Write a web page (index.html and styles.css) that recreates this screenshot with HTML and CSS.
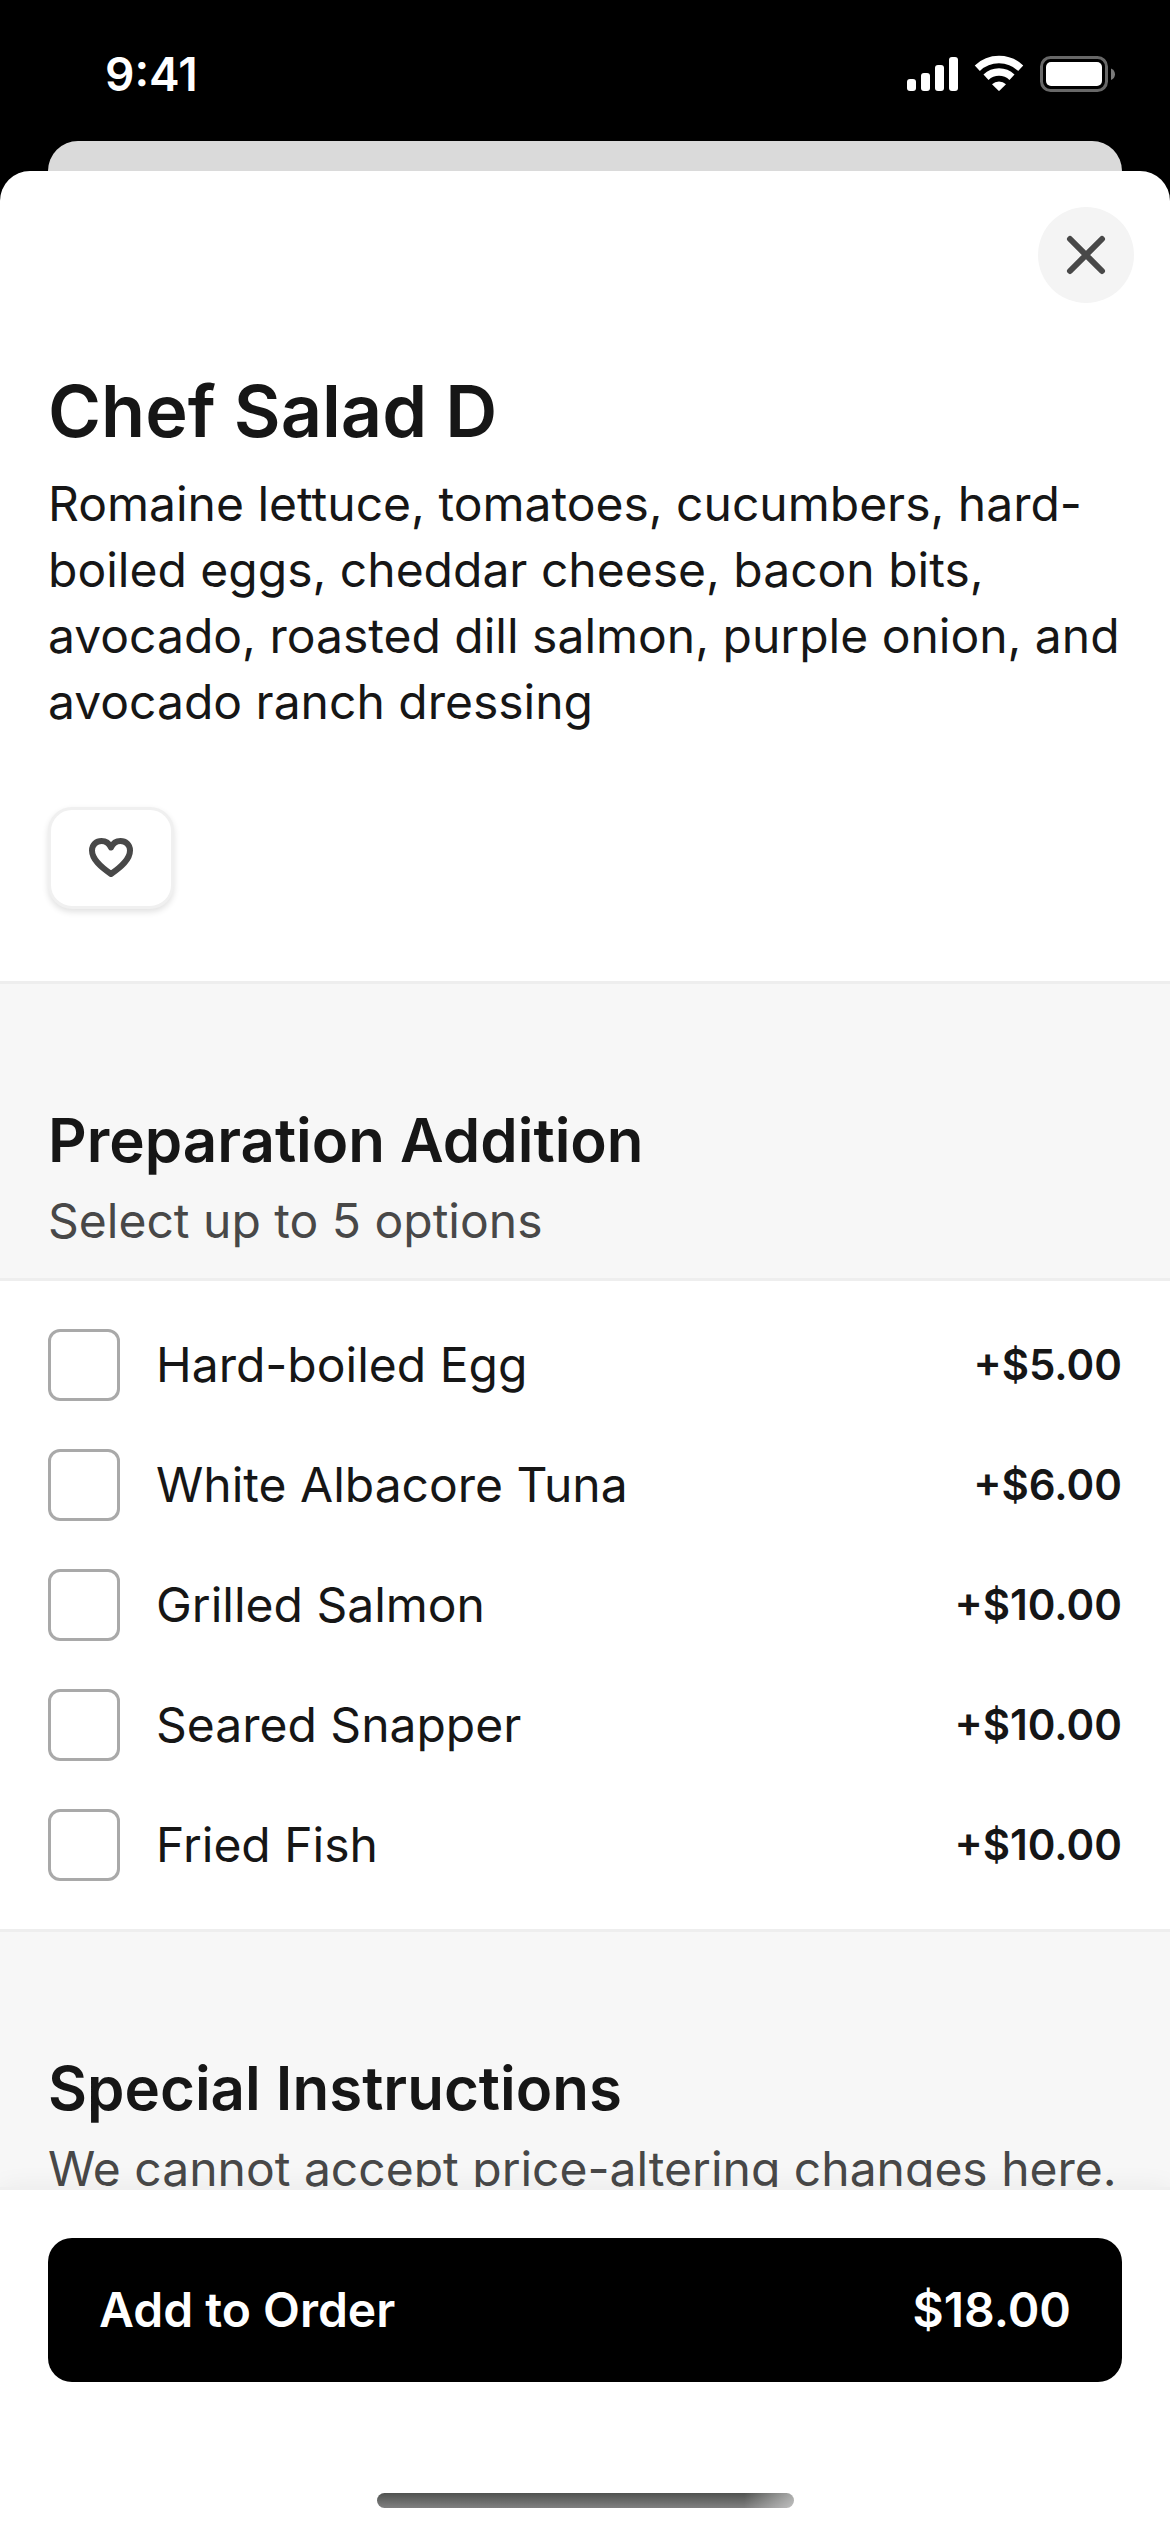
FILE: index.html
```html
<!DOCTYPE html>
<html lang="en">
<head>
    <meta charset="UTF-8">
    <meta name="viewport" content="width=device-width, initial-scale=1.0">
    <title>Chef Salad D</title>
    <link rel="stylesheet" href="styles.css">
</head>
<body>
    <header class="status-bar">
        <span class="time">9:41</span>
        <svg class="status-icons" width="210" height="40" viewBox="906 54 210 40" aria-hidden="true">
            <!-- Signal -->
            <g fill="#fff">
                <rect x="907" y="79" width="9" height="12" rx="3"/>
                <rect x="921" y="73" width="9" height="18" rx="3"/>
                <rect x="935" y="65" width="9" height="26" rx="3"/>
                <rect x="949" y="57" width="9" height="34" rx="3"/>
            </g>
            <!-- Wifi -->
            <g fill="none" stroke="#fff" stroke-width="7.4">
                <path d="M977.3 68.2a31.5 31.5 0 0 1 43.4 0"/>
                <path d="M986 77.2a19 19 0 0 1 26 0"/>
            </g>
            <path d="M992 84.2a10.200 10.200 0 0 1 14 0l-6.300 6.400a1 1 0 0 1-1.400 0z" fill="#fff"/>
            <!-- Battery -->
            <rect x="1041.500" y="57.500" width="65" height="33" rx="9" fill="none" stroke="#686868" stroke-width="3"/>
            <rect x="1046" y="62" width="56" height="24" rx="5" fill="#fff"/>
            <path d="M1111 68.500c5.300 2 5.300 9.500 0 11.500z" fill="#7a7a7a"/>
        </svg>
    </header>
    <div class="back-card"></div>

    <main class="sheet">
        <div class="scroller">
            <div class="item">
                <button class="close" type="button" aria-label="Close">
                    <svg width="48" height="48" viewBox="0 0 48 48" fill="none" stroke="#484848" stroke-width="6" stroke-linecap="round">
                        <path d="M8 8l32 32M40 8L8 40"/>
                    </svg>
                </button>
                <h1>Chef Salad D</h1>
                <p class="description">Romaine lettuce, tomatoes, cucumbers, hard-boiled eggs, cheddar cheese, bacon bits, avocado, roasted dill salmon, purple onion, and avocado ranch dressing</p>
                <button class="favorite" type="button" aria-label="Add to favorites">
                    <svg width="48" height="48" viewBox="0 0 48 48" fill="none" stroke="#484848" stroke-width="6" stroke-linejoin="round">
                        <path d="M24 40C14 33 5 25.500 5 16.500C5 10.500 9.500 7 14.500 7C18.500 7 22 9 24 13.500C26 9 29.500 7 33.500 7C38.500 7 43 10.500 43 16.500C43 25.500 34 33 24 40z"/>
                    </svg>
                </button>
            </div>

            <section>
                <div class="section-header">
                    <h2>Preparation Addition</h2>
                    <p>Select up to 5 options</p>
                </div>
                <div class="options">
                    <label class="option">
                        <input type="checkbox" name="addition" value="egg">
                        <span class="name">Hard-boiled Egg</span>
                        <span class="price">+$5.00</span>
                    </label>
                    <label class="option">
                        <input type="checkbox" name="addition" value="tuna">
                        <span class="name">White Albacore Tuna</span>
                        <span class="price">+$6.00</span>
                    </label>
                    <label class="option">
                        <input type="checkbox" name="addition" value="salmon">
                        <span class="name">Grilled Salmon</span>
                        <span class="price">+$10.00</span>
                    </label>
                    <label class="option">
                        <input type="checkbox" name="addition" value="snapper">
                        <span class="name">Seared Snapper</span>
                        <span class="price">+$10.00</span>
                    </label>
                    <label class="option">
                        <input type="checkbox" name="addition" value="fish">
                        <span class="name">Fried Fish</span>
                        <span class="price">+$10.00</span>
                    </label>
                </div>
            </section>

            <section>
                <div class="section-header">
                    <h2>Special Instructions</h2>
                    <p>We cannot accept price-altering changes here.</p>
                </div>
            </section>
        </div>

        <footer>
            <button class="add" type="button">
                <span>Add to Order</span>
                <span>$18.00</span>
            </button>
            <div class="home-indicator"></div>
        </footer>
    </main>
</body>
</html>
```

FILE: styles.css
```css
* {
    box-sizing: border-box;
}

body {
    margin: 0;
    height: 100vh;
    display: flex;
    flex-direction: column;
    background-color: #000000;
    color: #161616;
    font-family: Inter, "Liberation Sans", sans-serif;
    font-size: 48px;
    line-height: 66px;
}

h1, h2, p {
    margin: 0;
}

button {
    font: inherit;
    border: none;
    padding: 0;
    cursor: pointer;
}

svg {
    display: block;
}

.status-bar {
    display: flex;
    justify-content: space-between;
    align-items: center;
    height: 141px;
    padding: 6px 54px 0 105px;
    color: #ffffff;
    flex-shrink: 0;
}

.time {
    font-size: 46px;
    font-weight: 600;
}

.back-card {
    height: 30px;
    margin: 0 48px;
    border-radius: 30px 30px 0 0;
    background-color: #dadada;
    flex-shrink: 0;
}

.sheet {
    flex: 1;
    min-height: 0;
    display: flex;
    flex-direction: column;
    background-color: #ffffff;
    border-radius: 30px 30px 0 0;
    overflow: hidden;
}

.scroller {
    flex: 1;
    min-height: 0;
    overflow-y: auto;
    scrollbar-width: none;
}

.item {
    display: flex;
    flex-direction: column;
    align-items: flex-start;
    padding: 36px 48px 72px;
}

.close {
    display: flex;
    align-items: center;
    justify-content: center;
    align-self: flex-end;
    width: 96px;
    height: 96px;
    margin-right: -12px;
    border-radius: 50%;
    background-color: #f4f4f4;
}

h1 {
    margin-top: 66px;
    font-size: 72px;
    font-weight: 600;
    line-height: 84px;
}

.description {
    margin-top: 18px;
}

.favorite {
    display: flex;
    align-items: center;
    justify-content: center;
    width: 126px;
    height: 102px;
    margin-top: 72px;
    border: 3px solid #f0f0f0;
    border-radius: 24px;
    background-color: #ffffff;
    box-shadow: 0 3px 6px rgba(0, 0, 0, 0.12);
}

.section-header {
    padding: 120px 48px 24px;
    border-top: 3px solid #eeeeee;
    border-bottom: 3px solid #eeeeee;
    background-color: #f7f7f7;
}

h2 {
    font-size: 60px;
    font-weight: 600;
    line-height: 72px;
}

.section-header p {
    margin-top: 12px;
    color: #484848;
}

.options {
    display: flex;
    flex-direction: column;
    gap: 48px;
    padding: 48px;
}

.option {
    display: flex;
    align-items: center;
    gap: 36px;
    height: 72px;
    cursor: pointer;
}

.option input {
    appearance: none;
    width: 72px;
    height: 72px;
    margin: 0;
    border: 3px solid #a9a9a9;
    border-radius: 12px;
    background-color: #ffffff;
}

.option input:checked {
    background-color: #161616;
}

.name {
    flex: 1;
}

.price {
    font-size: 42px;
    font-weight: 600;
}

footer {
    position: relative;
    padding: 48px 48px 24px;
    border-top: 3px solid #f0f0f0;
    background-color: #ffffff;
    box-shadow: 0 0 24px rgba(0, 0, 0, 0.06);
}

.add {
    display: flex;
    justify-content: space-between;
    align-items: center;
    width: 100%;
    height: 144px;
    padding: 0 51px;
    border-radius: 24px;
    background-color: #000000;
    color: #ffffff;
    font-weight: 600;
}

.home-indicator {
    width: 417px;
    height: 15px;
    margin: 111px auto 0;
    border-radius: 8px;
    background: linear-gradient(to right, transparent 88%, rgba(255, 255, 255, 0.5)), linear-gradient(#505250, #808080);
}
```
